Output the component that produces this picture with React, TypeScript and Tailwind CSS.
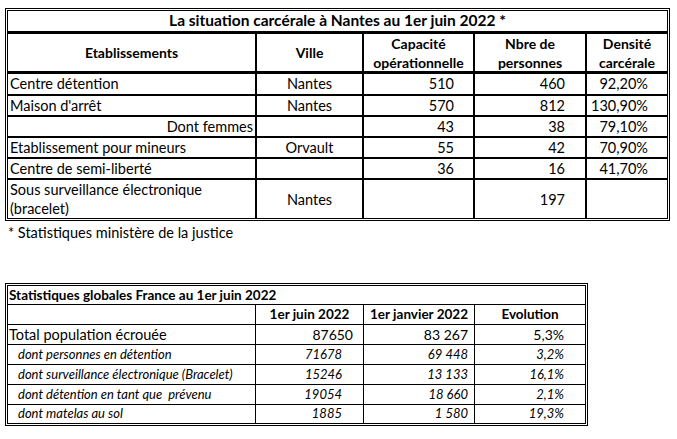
const cols1 = ['w-[249px]', 'w-[107px]', 'w-[111px]', 'w-[112px]', 'w-[80px]'];

type Row1 = {
  label: string;
  labelRight?: boolean;
  ville: string;
  capa: string;
  nbre: string;
  dens: string;
  tall?: boolean;
};

const rows1: Row1[] = [
  { label: 'Centre détention', ville: 'Nantes', capa: '510', nbre: '460', dens: '92,20%' },
  { label: "Maison d'arrêt", ville: 'Nantes', capa: '570', nbre: '812', dens: '130,90%' },
  { label: 'Dont femmes', labelRight: true, ville: '', capa: '43', nbre: '38', dens: '79,10%' },
  { label: 'Etablissement pour mineurs', ville: 'Orvault', capa: '55', nbre: '42', dens: '70,90%' },
  { label: 'Centre de semi-liberté', ville: '', capa: '36', nbre: '16', dens: '41,70%' },
  { label: 'Sous surveillance électronique (bracelet)', ville: 'Nantes', capa: '', nbre: '197', dens: '', tall: true },
];

const rows2 = [
  { label: 'dont personnes en détention', a: '71678', b: '69 448', c: '3,2%' },
  { label: 'dont surveillance électronique (Bracelet)', a: '15246', b: '13 133', c: '16,1%' },
  { label: 'dont détention en tant que  prévenu', a: '19054', b: '18 660', c: '2,1%' },
  { label: 'dont matelas au sol', a: '1885', b: '1 580', c: '19,3%' },
];

function SituationNantes() {
  return (
    <div className="w-[665px] border-[3px] border-double border-black">
      <div className="flex h-[23px] items-center justify-center border-b-[3px] border-black text-[15.5px] font-bold">
        La situation carcérale à Nantes au 1er juin 2022 *
      </div>
      <div className="flex h-[40px] border-b-[3px] border-black text-[14px] font-bold leading-[19px]">
        {['Etablissements', 'Ville', 'Capacité opérationnelle', 'Nbre de personnes', 'Densité carcérale'].map((h, i) => (
          <div
            key={h}
            className={`${cols1[i]} flex items-center justify-center text-center ${i < 4 ? 'border-r-2 border-black' : ''}`}
          >
            {i === 2 ? (
              <span>Capacité<br />opérationnelle</span>
            ) : i === 3 ? (
              <span>Nbre de<br />personnes</span>
            ) : i === 4 ? (
              <span>Densité<br />carcérale</span>
            ) : (
              h
            )}
          </div>
        ))}
      </div>
      {rows1.map((r, idx) => (
        <div
          key={r.label}
          className={`flex text-[14.5px] ${r.tall ? 'h-[38px] leading-[19px]' : idx === 0 ? 'h-[22px] border-b-2 border-black' : 'h-[21px] border-b-2 border-black'}`}
        >
          <div className={`w-[249px] flex items-center border-r-2 border-black px-[2px] ${r.labelRight ? 'justify-end' : ''}`}>
            {r.tall ? <span>Sous surveillance électronique<br />(bracelet)</span> : r.label}
          </div>
          <div className="w-[107px] flex items-center justify-center border-r-2 border-black">{r.ville}</div>
          <div className="w-[111px] flex items-center justify-end border-r-2 border-black pr-[19px]">{r.capa}</div>
          <div className="w-[112px] flex items-center justify-end border-r-2 border-black pr-[20px]">{r.nbre}</div>
          <div className="w-[80px] flex items-center justify-end pr-[19px]">{r.dens}</div>
        </div>
      ))}
    </div>
  );
}

function StatsFrance() {
  return (
    <div className="w-[583px] border-[3px] border-double border-black">
      <div className="flex h-[19px] items-center border-b border-black px-[1px] text-[13.5px] font-bold">
        Statistiques globales France au 1er juin 2022
      </div>
      <div className="flex h-[20px] border-b border-black text-[13.5px] font-bold">
        <div className="w-[248px] border-r border-black" />
        <div className="w-[108px] flex items-center justify-center border-r border-black">1er juin 2022</div>
        <div className="w-[111px] flex items-center justify-center border-r border-black">1er janvier 2022</div>
        <div className="w-[110px] flex items-center justify-center">Evolution</div>
      </div>
      <div className="flex h-[20px] border-b border-black text-[14.5px]">
        <div className="w-[248px] flex items-center border-r border-black px-[1px]">Total population écrouée</div>
        <div className="w-[108px] flex items-center justify-end border-r border-black pr-[10px] text-[14px]">87650</div>
        <div className="w-[111px] flex items-center justify-end border-r border-black pr-[6px] text-[14px]">83 267</div>
        <div className="w-[110px] flex items-center justify-end pr-[21px] text-[14px]">5,3%</div>
      </div>
      {rows2.map((r, i) => (
        <div
          key={r.label}
          className={`flex text-[13px] italic ${i === rows2.length - 1 ? 'h-[18px]' : 'h-[20px] border-b border-black'}`}
        >
          <div className="w-[248px] flex items-center border-r border-black pl-[10px] whitespace-pre">{r.label}</div>
          <div className="w-[108px] flex items-center justify-end border-r border-black pr-[21px]">{r.a}</div>
          <div className="w-[111px] flex items-center justify-end border-r border-black pr-[6px]">{r.b}</div>
          <div className="w-[110px] flex items-center justify-end pr-[21px]">{r.c}</div>
        </div>
      ))}
    </div>
  );
}

export default function App() {
  return (
    <div className="min-h-[439px] w-[677px] bg-white pl-[5px] pt-[8px] font-['Lato',sans-serif] text-black">
      <SituationNantes />
      <p className="mt-[2px] pl-[3px] text-[14.5px] leading-[20px]">* Statistiques ministère de la justice</p>
      <div className="mt-[40px]">
        <StatsFrance />
      </div>
    </div>
  );
}
